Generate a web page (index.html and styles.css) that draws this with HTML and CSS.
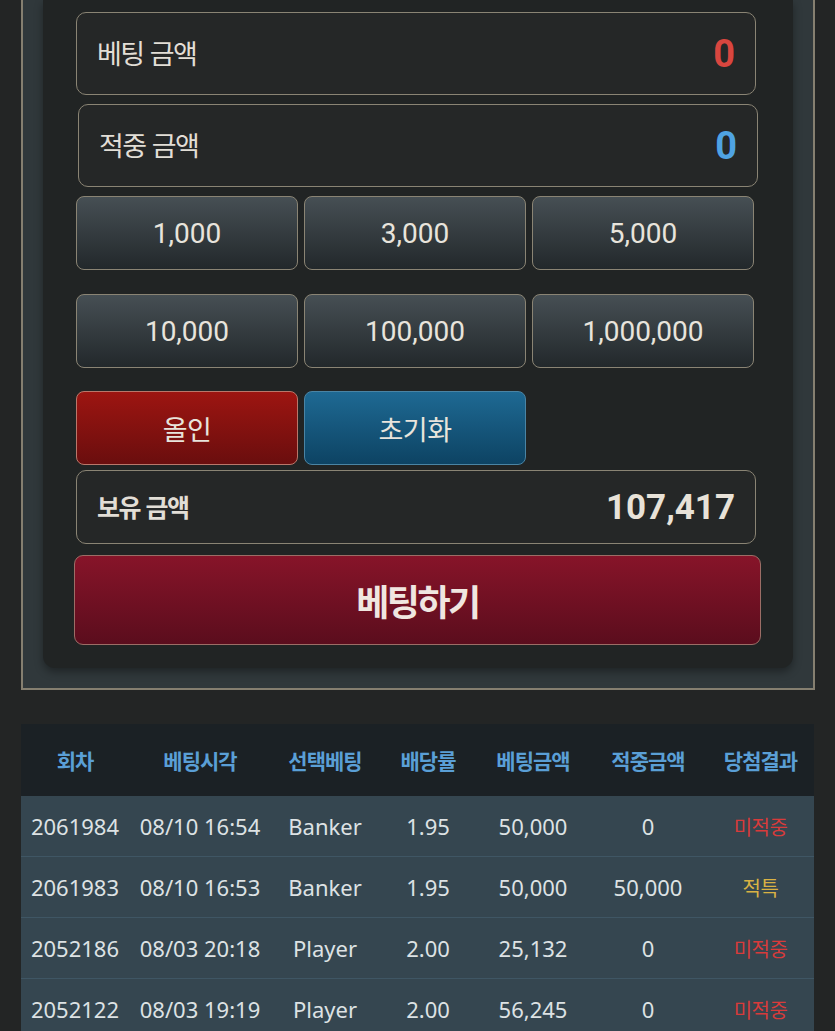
FILE: index.html
```html
<!DOCTYPE html>
<html lang="ko">
<head>
    <meta charset="UTF-8">
    <meta name="viewport" content="width=device-width, initial-scale=1.0">
    <title>베팅</title>
    <link rel="stylesheet" href="styles.css">
</head>
<body>

<div class="wrap">
    <div class="outer">
        <div class="panel">
            <div class="field">
                <span class="field-label">베팅 금액</span>
                <span class="field-value red">0</span>
            </div>
            <div class="field shifted">
                <span class="field-label">적중 금액</span>
                <span class="field-value blue">0</span>
            </div>

            <div class="chips">
                <button class="chip">1,000</button>
                <button class="chip">3,000</button>
                <button class="chip">5,000</button>
            </div>
            <div class="chips second">
                <button class="chip">10,000</button>
                <button class="chip">100,000</button>
                <button class="chip">1,000,000</button>
            </div>
            <div class="chips third">
                <button class="chip allin">올인</button>
                <button class="chip reset">초기화</button>
            </div>

            <div class="field balance">
                <span class="field-label bold">보유 금액</span>
                <span class="field-value light">107,417</span>
            </div>

            <button class="bet-btn">베팅하기</button>
        </div>
    </div>
</div>

<table class="history">
    <thead>
        <tr>
            <th class="c1">회차</th>
            <th class="c2">베팅시각</th>
            <th class="c3">선택베팅</th>
            <th class="c4">배당률</th>
            <th class="c5">베팅금액</th>
            <th class="c6">적중금액</th>
            <th class="c7">당첨결과</th>
        </tr>
    </thead>
    <tbody>
        <tr>
            <td>2061984</td>
            <td>08/10 16:54</td>
            <td>Banker</td>
            <td>1.95</td>
            <td>50,000</td>
            <td>0</td>
            <td class="lose">미적중</td>
        </tr>
        <tr>
            <td>2061983</td>
            <td>08/10 16:53</td>
            <td>Banker</td>
            <td>1.95</td>
            <td>50,000</td>
            <td>50,000</td>
            <td class="push">적특</td>
        </tr>
        <tr>
            <td>2052186</td>
            <td>08/03 20:18</td>
            <td>Player</td>
            <td>2.00</td>
            <td>25,132</td>
            <td>0</td>
            <td class="lose">미적중</td>
        </tr>
        <tr>
            <td>2052122</td>
            <td>08/03 19:19</td>
            <td>Player</td>
            <td>2.00</td>
            <td>56,245</td>
            <td>0</td>
            <td class="lose">미적중</td>
        </tr>
    </tbody>
</table>

</body>
</html>
```

FILE: styles.css
```css
body {
    margin: 0;
    background-color: #232525;
    font-family: Roboto, "Noto Sans CJK KR", sans-serif;
    color: #e4e0d8;
}
.wrap {
    padding: 0 20px 0 21px;
}
.outer {
    background-color: #30383b;
    border: 2px solid #857f70;
    border-top: none;
    padding: 0 20px 20px 20px;
}
.panel {
    background-color: #212424;
    border-radius: 0 0 12px 12px;
    box-shadow: 0 4px 8px rgba(0, 0, 0, 0.35);
    padding: 12px 37px 23px 33px;
}
.field {
    display: flex;
    justify-content: space-between;
    align-items: center;
    box-sizing: border-box;
    height: 83px;
    padding: 0 20px;
    background-color: #252727;
    border: 1.5px solid #8a8474;
    border-radius: 10px;
    margin-bottom: 9px;
}
.field.shifted {
    margin-left: 2px;
    margin-right: -2px;
}
.field-label {
    font-family: "Noto Sans CJK KR", sans-serif;
    font-size: 27px;
    letter-spacing: -1.5px;
    color: #e2ded6;
    margin-top: -3px;
}
.field-label.bold {
    font-size: 25px;
    font-weight: bold;
    letter-spacing: -1.5px;
}
.field-value {
    font-family: Roboto, sans-serif;
    font-size: 38px;
    font-weight: bold;
}
.red {
    color: #d9463f;
}
.blue {
    color: #4fa3e3;
}
.light {
    font-size: 35px;
    color: #e8e2d8;
}
.field.balance {
    height: 74px;
    margin-top: 5px;
    margin-bottom: 11px;
}
.chips {
    display: grid;
    grid-template-columns: repeat(3, 222px);
    column-gap: 6px;
}
.chips.second {
    margin-top: 24px;
}
.chips.third {
    margin-top: 23px;
}
.chip {
    height: 74px;
    padding: 0;
    border: 1.5px solid #8a8474;
    border-radius: 8px;
    background: linear-gradient(to bottom, #464f54, #22282b);
    color: #e8e4dc;
    font-family: Roboto, "Noto Sans CJK KR", sans-serif;
    font-size: 28px;
}
.chip.allin {
    background: linear-gradient(to bottom, #9d1511, #6a0e0e);
    border-color: #b9776a;
    font-family: "Noto Sans CJK KR", sans-serif;
    font-size: 27px;
    letter-spacing: -0.5px;
}
.chip.reset {
    background: linear-gradient(to bottom, #1e6993, #0d4363);
    border-color: #4a84a4;
    font-family: "Noto Sans CJK KR", sans-serif;
    font-size: 27px;
    letter-spacing: -0.5px;
}
.bet-btn {
    display: block;
    box-sizing: border-box;
    width: calc(100% + 7px);
    height: 90px;
    margin-left: -2px;
    border: 1.5px solid #9c6d66;
    border-radius: 9px;
    background: linear-gradient(to bottom, #871429, #5b0d1d);
    color: #f0e6e0;
    font-family: "Noto Sans CJK KR", sans-serif;
    font-size: 36px;
    font-weight: bold;
    letter-spacing: -2.5px;
}
.history {
    width: 793px;
    margin: 34px 0 0 21px;
    border-collapse: collapse;
    table-layout: fixed;
    font-family: "Noto Sans", sans-serif;
}
.history th {
    height: 72px;
    padding: 0;
    background-color: #1b2125;
    color: #5a9fd6;
    font-family: "Noto Sans CJK KR", sans-serif;
    font-size: 21px;
    font-weight: bold;
    letter-spacing: -1px;
}
.c1 { width: 108px; }
.c2 { width: 142px; }
.c3 { width: 108px; }
.c4 { width: 98px; }
.c5 { width: 112px; }
.c6 { width: 118px; }
.c7 { width: 107px; }
.history td {
    height: 60px;
    padding: 0;
    text-align: center;
    background-color: #354650;
    border-top: 1px solid #3f5664;
    color: #dde2e4;
    font-size: 22px;
    white-space: nowrap;
}
.history tbody tr:first-child td {
    border-top: none;
}
.history td.lose {
    color: #d83b3b;
    font-family: "Noto Sans CJK KR", sans-serif;
    font-size: 20px;
    letter-spacing: -0.5px;
}
.history td.push {
    color: #d9b244;
    font-family: "Noto Sans CJK KR", sans-serif;
    font-size: 20px;
    letter-spacing: -0.5px;
}
```
